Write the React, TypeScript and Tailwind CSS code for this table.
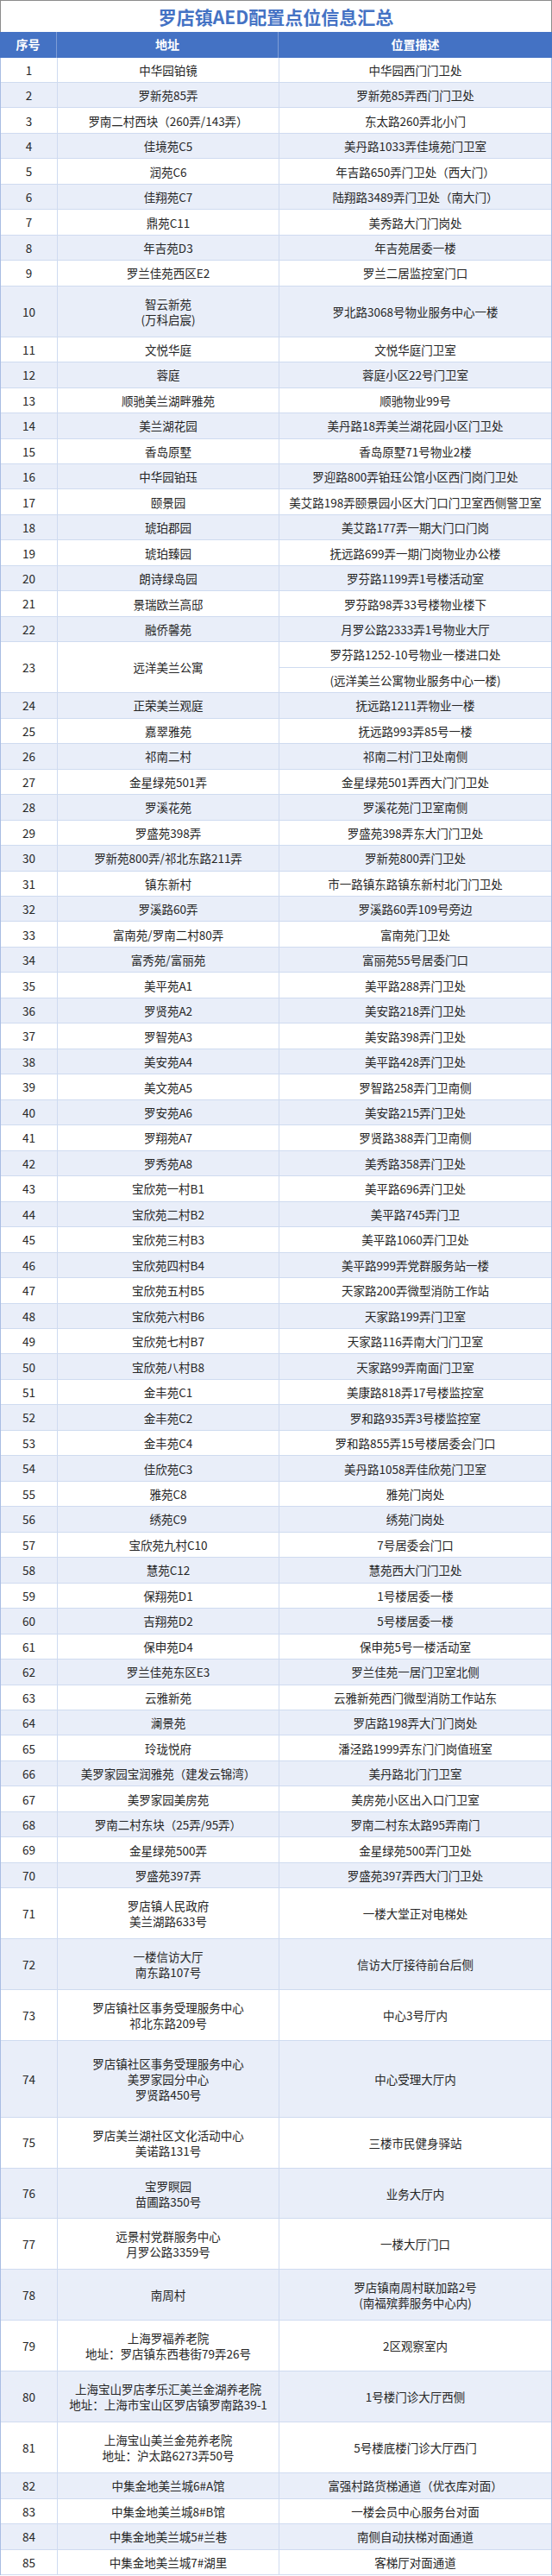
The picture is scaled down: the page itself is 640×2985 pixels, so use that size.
type Row = {
  addr: string
  desc: string | string[]
  units?: number
  split?: boolean
}

const rows: Row[] = [
  { addr: '中华园铂镜', desc: '中华园西门门卫处' },
  { addr: '罗新苑85弄', desc: '罗新苑85弄西门门卫处' },
  { addr: '罗南二村西块（260弄/143弄）', desc: '东太路260弄北小门' },
  { addr: '佳境苑C5', desc: '美丹路1033弄佳境苑门卫室' },
  { addr: '润苑C6', desc: '年吉路650弄门卫处（西大门）' },
  { addr: '佳翔苑C7', desc: '陆翔路3489弄门卫处（南大门）' },
  { addr: '鼎苑C11', desc: '美秀路大门门岗处' },
  { addr: '年吉苑D3', desc: '年吉苑居委一楼' },
  { addr: '罗兰佳苑西区E2', desc: '罗兰二居监控室门口' },
  { addr: '智云新苑\n(万科启宸)', desc: '罗北路3068号物业服务中心一楼', units: 2 },
  { addr: '文悦华庭', desc: '文悦华庭门卫室' },
  { addr: '蓉庭', desc: '蓉庭小区22号门卫室' },
  { addr: '顺驰美兰湖畔雅苑', desc: '顺驰物业99号' },
  { addr: '美兰湖花园', desc: '美丹路18弄美兰湖花园小区门卫处' },
  { addr: '香岛原墅', desc: '香岛原墅71号物业2楼' },
  { addr: '中华园铂珏', desc: '罗迎路800弄铂珏公馆小区西门岗门卫处' },
  { addr: '颐景园', desc: '美艾路198弄颐景园小区大门口门卫室西侧警卫室' },
  { addr: '琥珀郡园', desc: '美艾路177弄一期大门口门岗' },
  { addr: '琥珀臻园', desc: '抚远路699弄一期门岗物业办公楼' },
  { addr: '朗诗绿岛园', desc: '罗芬路1199弄1号楼活动室' },
  { addr: '景瑞欧兰高邸', desc: '罗芬路98弄33号楼物业楼下' },
  { addr: '融侨馨苑', desc: '月罗公路2333弄1号物业大厅' },
  { addr: '远洋美兰公寓', desc: ['罗芬路1252-10号物业一楼进口处', '(远洋美兰公寓物业服务中心一楼)'], units: 2, split: true },
  { addr: '正荣美兰观庭', desc: '抚远路1211弄物业一楼' },
  { addr: '嘉翠雅苑', desc: '抚远路993弄85号一楼' },
  { addr: '祁南二村', desc: '祁南二村门卫处南侧' },
  { addr: '金星绿苑501弄', desc: '金星绿苑501弄西大门门卫处' },
  { addr: '罗溪花苑', desc: '罗溪花苑门卫室南侧' },
  { addr: '罗盛苑398弄', desc: '罗盛苑398弄东大门门卫处' },
  { addr: '罗新苑800弄/祁北东路211弄', desc: '罗新苑800弄门卫处' },
  { addr: '镇东新村', desc: '市一路镇东路镇东新村北门门卫处' },
  { addr: '罗溪路60弄', desc: '罗溪路60弄109号旁边' },
  { addr: '富南苑/罗南二村80弄', desc: '富南苑门卫处' },
  { addr: '富秀苑/富丽苑', desc: '富丽苑55号居委门口' },
  { addr: '美平苑A1', desc: '美平路288弄门卫处' },
  { addr: '罗贤苑A2', desc: '美安路218弄门卫处' },
  { addr: '罗智苑A3', desc: '美安路398弄门卫处' },
  { addr: '美安苑A4', desc: '美平路428弄门卫处' },
  { addr: '美文苑A5', desc: '罗智路258弄门卫南侧' },
  { addr: '罗安苑A6', desc: '美安路215弄门卫处' },
  { addr: '罗翔苑A7', desc: '罗贤路388弄门卫南侧' },
  { addr: '罗秀苑A8', desc: '美秀路358弄门卫处' },
  { addr: '宝欣苑一村B1', desc: '美平路696弄门卫处' },
  { addr: '宝欣苑二村B2', desc: '美平路745弄门卫' },
  { addr: '宝欣苑三村B3', desc: '美平路1060弄门卫处' },
  { addr: '宝欣苑四村B4', desc: '美平路999弄党群服务站一楼' },
  { addr: '宝欣苑五村B5', desc: '天家路200弄微型消防工作站' },
  { addr: '宝欣苑六村B6', desc: '天家路199弄门卫室' },
  { addr: '宝欣苑七村B7', desc: '天家路116弄南大门门卫室' },
  { addr: '宝欣苑八村B8', desc: '天家路99弄南面门卫室' },
  { addr: '金丰苑C1', desc: '美康路818弄17号楼监控室' },
  { addr: '金丰苑C2', desc: '罗和路935弄3号楼监控室' },
  { addr: '金丰苑C4', desc: '罗和路855弄15号楼居委会门口' },
  { addr: '佳欣苑C3', desc: '美丹路1058弄佳欣苑门卫室' },
  { addr: '雅苑C8', desc: '雅苑门岗处' },
  { addr: '绣苑C9', desc: '绣苑门岗处' },
  { addr: '宝欣苑九村C10', desc: '7号居委会门口' },
  { addr: '慧苑C12', desc: '慧苑西大门门卫处' },
  { addr: '保翔苑D1', desc: '1号楼居委一楼' },
  { addr: '吉翔苑D2', desc: '5号楼居委一楼' },
  { addr: '保申苑D4', desc: '保申苑5号一楼活动室' },
  { addr: '罗兰佳苑东区E3', desc: '罗兰佳苑一居门卫室北侧' },
  { addr: '云雅新苑', desc: '云雅新苑西门微型消防工作站东' },
  { addr: '澜景苑', desc: '罗店路198弄大门门岗处' },
  { addr: '玲珑悦府', desc: '潘泾路1999弄东门门岗值班室' },
  { addr: '美罗家园宝润雅苑（建发云锦湾）', desc: '美丹路北门门卫室' },
  { addr: '美罗家园美房苑', desc: '美房苑小区出入口门卫室' },
  { addr: '罗南二村东块（25弄/95弄）', desc: '罗南二村东太路95弄南门' },
  { addr: '金星绿苑500弄', desc: '金星绿苑500弄门卫处' },
  { addr: '罗盛苑397弄', desc: '罗盛苑397弄西大门门卫处' },
  { addr: '罗店镇人民政府\n美兰湖路633号', desc: '一楼大堂正对电梯处', units: 2 },
  { addr: '一楼信访大厅\n南东路107号', desc: '信访大厅接待前台后侧', units: 2 },
  { addr: '罗店镇社区事务受理服务中心\n祁北东路209号', desc: '中心3号厅内', units: 2 },
  { addr: '罗店镇社区事务受理服务中心\n美罗家园分中心\n罗贤路450号', desc: '中心受理大厅内', units: 3 },
  { addr: '罗店美兰湖社区文化活动中心\n美诺路131号', desc: '三楼市民健身驿站', units: 2 },
  { addr: '宝罗瞑园\n苗圃路350号', desc: '业务大厅内', units: 2 },
  { addr: '远景村党群服务中心\n月罗公路3359号', desc: '一楼大厅门口', units: 2 },
  { addr: '南周村', desc: ['罗店镇南周村联加路2号', '(南福殡葬服务中心内)'], units: 2 },
  { addr: '上海罗福养老院\n地址：罗店镇东西巷街79弄26号', desc: '2区观察室内', units: 2 },
  { addr: '上海宝山罗店孝乐汇美兰金湖养老院\n地址：上海市宝山区罗店镇罗南路39-1', desc: '1号楼门诊大厅西侧', units: 2 },
  { addr: '上海宝山美兰金苑养老院\n地址：沪太路6273弄50号', desc: '5号楼底楼门诊大厅西门', units: 2 },
  { addr: '中集金地美兰城6#A馆', desc: '富强村路货梯通道（优衣库对面）' },
  { addr: '中集金地美兰城8#B馆', desc: '一楼会员中心服务台对面' },
  { addr: '中集金地美兰城5#兰巷', desc: '南侧自动扶梯对面通道' },
  { addr: '中集金地美兰城7#湖里', desc: '客梯厅对面通道' },
]

const UNIT = 29.48

function Lines({ text }: { text: string | string[] }) {
  const parts = Array.isArray(text) ? text : text.split('\n')
  return (
    <div className="flex flex-col items-center leading-[18px]">
      {parts.map((p, i) => (
        <span key={i} className="whitespace-nowrap">{p}</span>
      ))}
    </div>
  )
}

export default function App() {
  return (
    <div
      className="w-[640px] bg-white text-[13.5px] text-[#262626]"
      style={{ fontFamily: '"Noto Sans CJK SC", "Noto Sans", sans-serif' }}
    >
      <div className="flex h-[37px] items-center justify-center border-x border-t border-[#8c8c8c]">
        <h1 className="text-[21px] font-bold leading-none text-[#4472c4]">罗店镇AED配置点位信息汇总</h1>
      </div>

      <div className="flex h-[29.5px] bg-[#4472c4] text-[14px] font-bold text-white">
        <div className="flex w-[66px] items-center justify-center border-r border-[#7e9dd6]">序号</div>
        <div className="flex w-[257px] items-center justify-center border-r border-[#7e9dd6]">地址</div>
        <div className="flex flex-1 items-center justify-center">位置描述</div>
      </div>

      <div className="border-x border-[#a9bde3]">
        {rows.map((r, i) => {
          const units = r.units ?? 1
          const even = (i + 1) % 2 === 0
          return (
            <div
              key={i}
              className={`flex border-b border-[#cfdbf0] ${even ? 'bg-[#e9eef9]' : 'bg-white'}`}
              style={{ height: UNIT * units }}
            >
              <div className="flex w-[66px] shrink-0 items-center justify-center border-r border-[#cfdbf0]">
                {i + 1}
              </div>
              <div className="flex w-[257px] shrink-0 items-center justify-center border-r border-[#cfdbf0]">
                <Lines text={r.addr} />
              </div>
              {r.split && Array.isArray(r.desc) ? (
                <div className="flex flex-1 flex-col">
                  <div className="flex flex-1 items-center justify-center border-b border-[#cfdbf0]">{r.desc[0]}</div>
                  <div className="flex flex-1 items-center justify-center">{r.desc[1]}</div>
                </div>
              ) : (
                <div className="flex flex-1 items-center justify-center">
                  <Lines text={r.desc} />
                </div>
              )}
            </div>
          )
        })}
      </div>
    </div>
  )
}
